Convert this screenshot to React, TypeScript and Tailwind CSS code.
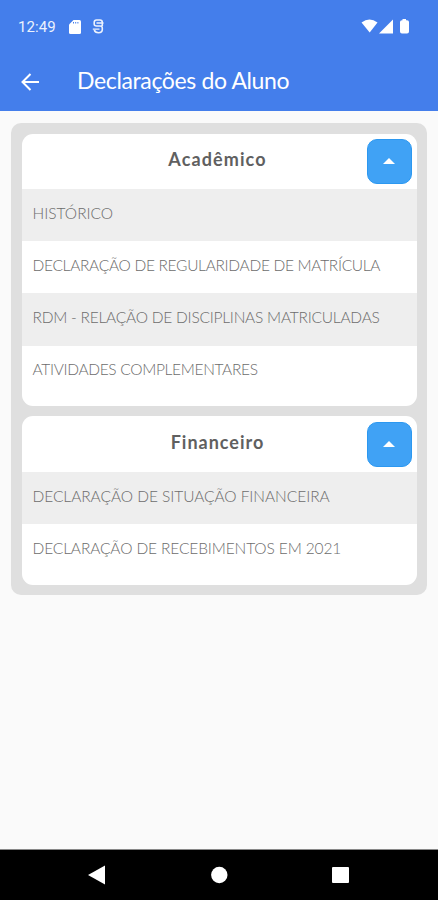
interface DeclarationItem {
  label: string;
  tracking: string;
}

interface SectionProps {
  title: string;
  titleClass: string;
  items: DeclarationItem[];
}

const academico: DeclarationItem[] = [
  { label: 'HISTÓRICO', tracking: 'tracking-[0px]' },
  { label: 'DECLARAÇÃO DE REGULARIDADE DE MATRÍCULA', tracking: 'tracking-[-0.3px]' },
  { label: 'RDM - RELAÇÃO DE DISCIPLINAS MATRICULADAS', tracking: 'tracking-[-0.23px]' },
  { label: 'ATIVIDADES COMPLEMENTARES', tracking: 'tracking-[-0.32px]' },
];

const financeiro: DeclarationItem[] = [
  { label: 'DECLARAÇÃO DE SITUAÇÃO FINANCEIRA', tracking: 'tracking-[-0.05px]' },
  { label: 'DECLARAÇÃO DE RECEBIMENTOS EM 2021', tracking: 'tracking-[-0.12px]' },
];

function StatusBar() {
  return (
    <div className="flex h-[53px] items-center pl-[18px] pr-[28px] text-white">
      <span className="w-[51px] pt-px font-[Roboto,sans-serif] text-[15px] tracking-[0.1px] opacity-90">12:49</span>
      <svg className="h-[14px] w-[12px]" viewBox="0 0 12 14" fill="currentColor">
        <path d="M4.5 0H10.5Q12 0 12 1.5V12.5Q12 14 10.5 14H1.5Q0 14 0 12.5V4.5Z" />
        <path d="M4.5 2V3.5M6.7 2V3.5M8.9 2V3.5" stroke="#447eeb" strokeWidth="1" />
      </svg>
      <svg className="ml-[11px] h-[15px] w-[12px] opacity-90" viewBox="0 0 12 15" fill="none" stroke="currentColor" strokeWidth="1.6">
        <path d="M10.3 7V3.5Q10.3 1 8 1H4.5Q2.2 1 2.2 3.5V5Q2.2 7 4.5 7H8Q10.3 7 10.3 9V10.5Q10.3 13.7 6.5 13.7Q3 13.7 2.3 11" />
        <path d="M4.5 4H11.5M0.8 10.2H7.5" strokeWidth="1.3" />
      </svg>
      <svg className="ml-auto h-[15px] w-[49px]" viewBox="0 0 49 15" fill="currentColor">
        <path d="M0.5 3.5Q8.5 -2.5 16.5 3.5L8.7 13.5Z" />
        <path d="M18 14.5L32 0.5V14.5Z" />
        <path d="M41.5 0H45V1.2H46Q48 1.2 48 3V12.5Q48 14.5 46 14.5H41Q39 14.5 39 12.5V3Q39 1.2 41 1.2H41.5Z" />
      </svg>
    </div>
  );
}

function Section({ title, titleClass, items }: SectionProps) {
  return (
    <section className="overflow-hidden rounded-[11px] bg-white pb-[8.2px]">
      <div className="grid h-[55.5px] grid-cols-[1fr_45px] items-center pr-[5px]">
        <h2 className={`pb-[4px] pl-[47px] text-center text-[18px] font-bold leading-none text-[#606060] ${titleClass}`}>{title}</h2>
        <button className="flex h-[45px] w-[45px] items-center justify-center rounded-[10px] border border-[#2c98f0] bg-[#40a2f5]">
          <svg className="h-[6px] w-[12px]" viewBox="0 0 12 6" fill="white">
            <path d="M0 6L6 0L12 6Z" />
          </svg>
        </button>
      </div>
      <ul>
        {items.map((item) => (
          <li key={item.label} className="flex h-[52.2px] items-center px-[11px] pb-[3px] odd:bg-[#eeeeee]">
            <span className={`whitespace-nowrap text-[15.5px] font-light leading-none text-[#6c6c6c] ${item.tracking}`}>
              {item.label}
            </span>
          </li>
        ))}
      </ul>
    </section>
  );
}

export default function App() {
  return (
    <div className="flex h-[900px] w-[438px] flex-col overflow-hidden bg-[#fafafa] font-[Lato,sans-serif]">
      <header className="h-[111px] bg-[#447eeb]">
        <StatusBar />
        <div className="flex h-[57px] items-center pl-[21px] text-white">
          <svg className="h-[18px] w-[19px]" viewBox="0 0 19 18" fill="none" stroke="currentColor" strokeWidth="2">
            <path d="M18 9H2M9.5 1L1.5 9L9.5 17" />
          </svg>
          <h1 className="ml-[37px] pb-[3px] text-[23px] leading-none tracking-[-0.36px]">Declarações do Aluno</h1>
        </div>
      </header>

      <main className="flex-1 px-[11px] pt-[12px]">
        <div className="flex flex-col gap-[10.5px] rounded-[10px] bg-[#dfdfdf] p-[10.5px]">
          <Section title="Acadêmico" titleClass="tracking-[1.1px]" items={academico} />
          <Section title="Financeiro" titleClass="tracking-[1px]" items={financeiro} />
        </div>
      </main>

      <nav className="h-[51px] border-t border-[#888] bg-black">
        <svg className="h-[50px] w-[438px]" viewBox="0 0 438 50" fill="white">
          <path d="M88 25L105 15.5V34.5Z" />
          <circle cx="219.3" cy="25" r="8.2" />
          <rect x="332" y="17" width="17" height="16" rx="1" />
        </svg>
      </nav>
    </div>
  );
}
